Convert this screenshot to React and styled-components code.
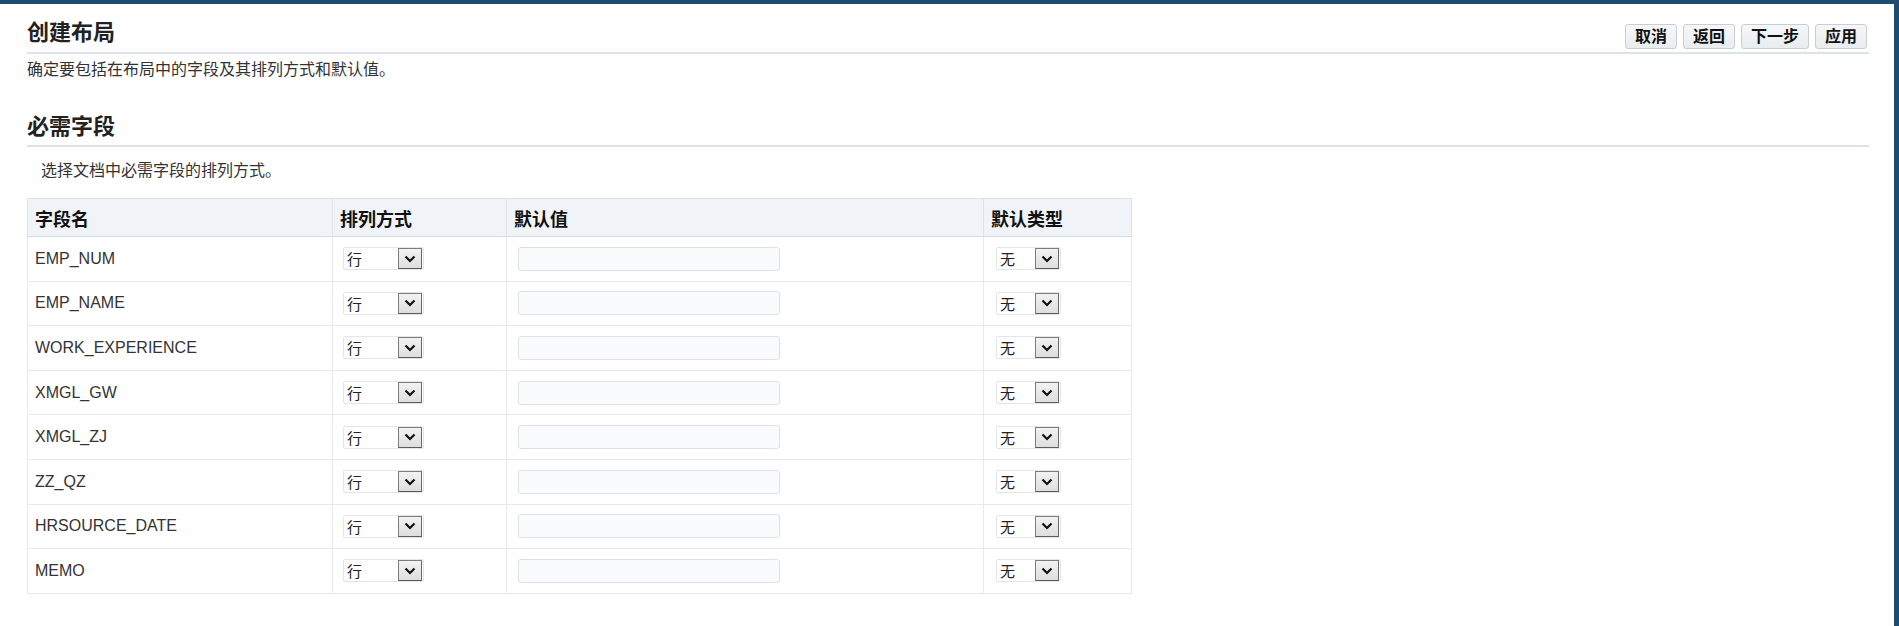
import React from 'react'
import styled, { createGlobalStyle } from 'styled-components'

const GlobalStyle = createGlobalStyle`
  html, body {
    margin: 0;
    padding: 0;
    background: #fff;
  }
  body {
    font-family: "Liberation Sans", Arial, "Noto Sans CJK SC", sans-serif;
    color: #222;
  }
`

const Frame = styled.div`
  box-sizing: border-box;
  width: 1899px;
  height: 626px;
  border-top: 4px solid #1f4b71;
  border-right: 5px solid #1f4b71;
  padding: 0 25px 0 27px;
  overflow: hidden;
`

const PageHeader = styled.header`
  display: flex;
  align-items: flex-end;
  justify-content: space-between;
  height: 48px;
  border-bottom: 2px solid #dce3eb;
`

const Title = styled.h1`
  margin: 0 0 6px;
  font-size: 22px;
  line-height: 26px;
  font-weight: 700;
  color: #222;
`

const Actions = styled.div`
  display: flex;
  gap: 6px;
  margin-bottom: 3px;
  margin-right: 2px;
`

const Button = styled.button`
  box-sizing: border-box;
  height: 25px;
  padding: 0 9px;
  border: 1px solid #c7ced6;
  border-radius: 3px;
  background: linear-gradient(#f6f7f8, #e9ecef);
  font-family: "Liberation Sans", "Noto Sans CJK SC", sans-serif;
  font-size: 16px;
  font-weight: 700;
  color: #111;
  line-height: 21px;
`

const Intro = styled.p`
  margin: 6px 0 0;
  font-size: 16px;
  line-height: 20px;
  color: #333;
`

const SectionTitle = styled.h2`
  margin: 34px 0 0;
  padding-bottom: 5px;
  font-size: 22px;
  line-height: 26px;
  font-weight: 700;
  color: #222;
  border-bottom: 2px solid #dce3eb;
`

const Hint = styled.p`
  margin: 14px 0 0 14px;
  font-size: 16px;
  line-height: 20px;
  color: #333;
`

const Table = styled.table`
  margin-top: 17px;
  border-collapse: collapse;
  table-layout: fixed;
  width: 1104px;
  border: 1px solid #e3e7ec;
`

const Th = styled.th`
  height: 37px;
  padding: 0 7px;
  text-align: left;
  font-size: 18px;
  font-weight: 700;
  color: #111;
  background: #f0f3f7;
  border: 1px solid #dde3ea;
  border-bottom-color: #d3dbe4;
`

const Row = styled.tr`
  height: 44.6px;
`

const Td = styled.td`
  padding: 0 7px;
  font-size: 16px;
  color: #333;
  border: 1px solid #e6e9ed;
  vertical-align: middle;
`

const SelectBox = styled.div`
  box-sizing: border-box;
  display: flex;
  align-items: center;
  justify-content: space-between;
  width: ${p => p.$width}px;
  height: 23px;
  margin-left: ${p => p.$offset || 0}px;
  padding: 0 1px 0 3px;
  border: 1px solid #e2e6ea;
  border-radius: 2px;
  background: #fff;
  font-family: "Noto Sans CJK SC", sans-serif;
  font-size: 15px;
  color: #222;
`

const ArrowBox = styled.span`
  box-sizing: border-box;
  display: flex;
  align-items: center;
  justify-content: center;
  width: 24px;
  height: 21px;
  border: 1px solid #7d7d7d;
  border-right-color: #6a6a6a;
  border-bottom-color: #5c5c5c;
  background: linear-gradient(#f2f2f2, #dedede);
`

const TextInput = styled.input`
  box-sizing: border-box;
  display: block;
  width: 262px;
  height: 24px;
  margin-left: 4px;
  border: 1px solid #dde2e8;
  border-radius: 3px;
  background: #f9fbfd;
  outline: none;
`

const Chevron = () => (
  <svg width="12" height="8" viewBox="0 0 12 8">
    <path d="M1.5 1.5 L6 6 L10.5 1.5" fill="none" stroke="#111" strokeWidth="2.2" />
  </svg>
)

const Select = ({ value, width, offset }) => (
  <SelectBox $width={width} $offset={offset}>
    <span>{value}</span>
    <ArrowBox>
      <Chevron />
    </ArrowBox>
  </SelectBox>
)

const fields = ['EMP_NUM', 'EMP_NAME', 'WORK_EXPERIENCE', 'XMGL_GW', 'XMGL_ZJ', 'ZZ_QZ', 'HRSOURCE_DATE', 'MEMO']

export default function App() {
  return (
    <Frame>
      <GlobalStyle />
      <PageHeader>
        <Title>创建布局</Title>
        <Actions>
          <Button>取消</Button>
          <Button>返回</Button>
          <Button>下一步</Button>
          <Button>应用</Button>
        </Actions>
      </PageHeader>
      <Intro>确定要包括在布局中的字段及其排列方式和默认值。</Intro>
      <SectionTitle>必需字段</SectionTitle>
      <Hint>选择文档中必需字段的排列方式。</Hint>
      <Table>
        <colgroup>
          <col style={{ width: 305 }} />
          <col style={{ width: 174 }} />
          <col style={{ width: 477 }} />
          <col style={{ width: 148 }} />
        </colgroup>
        <thead>
          <tr>
            <Th>字段名</Th>
            <Th>排列方式</Th>
            <Th>默认值</Th>
            <Th>默认类型</Th>
          </tr>
        </thead>
        <tbody>
          {fields.map(name => (
            <Row key={name}>
              <Td>{name}</Td>
              <Td>
                <Select value="行" width={81} offset={3} />
              </Td>
              <Td>
                <TextInput type="text" />
              </Td>
              <Td>
                <Select value="无" width={65} offset={5} />
              </Td>
            </Row>
          ))}
        </tbody>
      </Table>
    </Frame>
  )
}
